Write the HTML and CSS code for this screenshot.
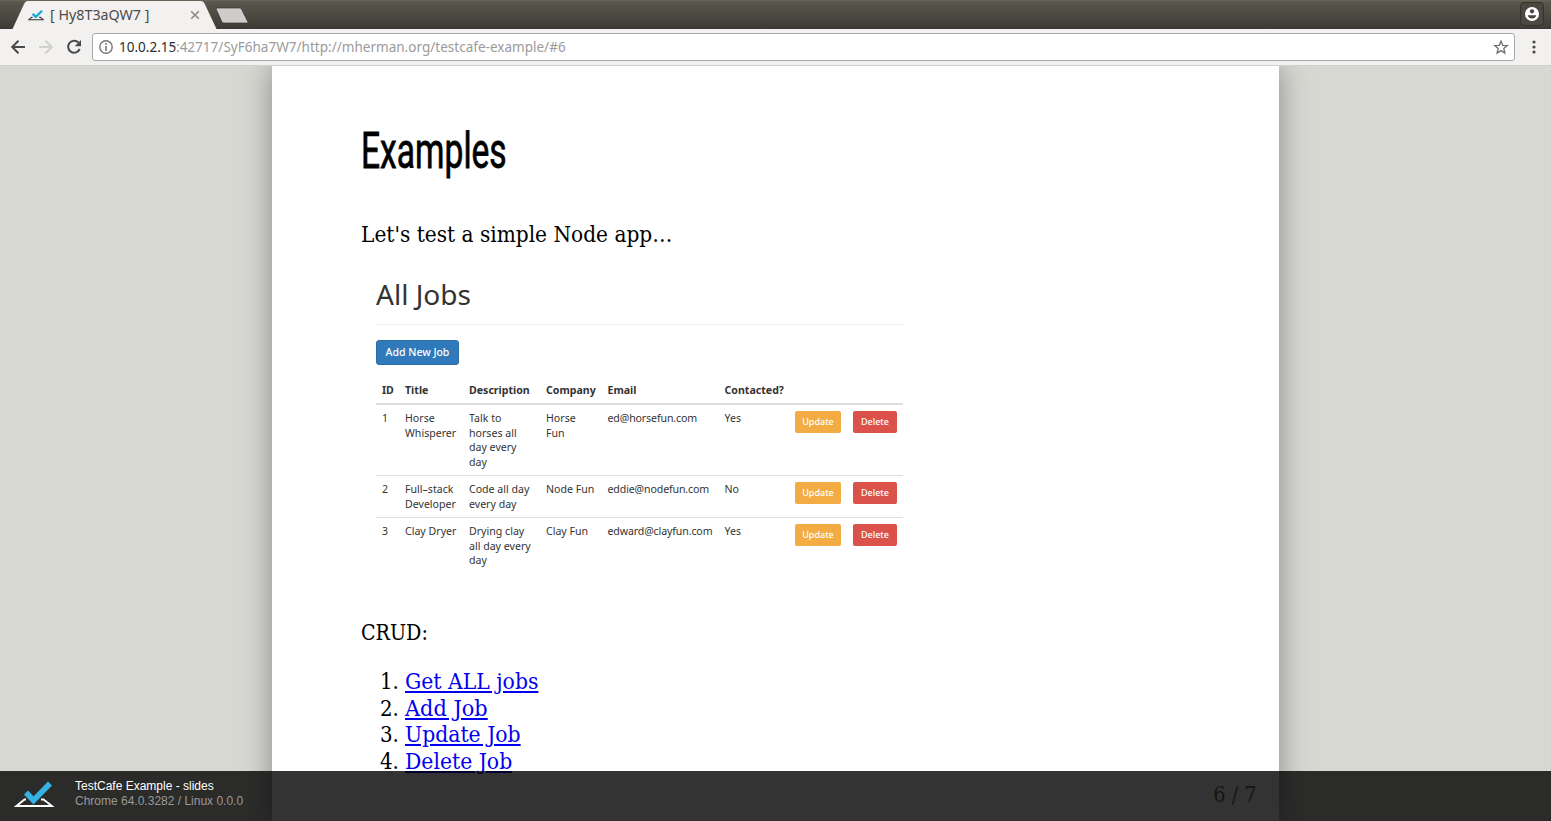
FILE: index.html
```html
<!DOCTYPE html>
<html lang="en">
<head>
<meta charset="utf-8">
<title>[ Hy8T3aQW7 ]</title>
<link rel="stylesheet" href="styles.css">
</head>
<body>
<div class="window">
  <header class="tabs">
    <svg class="tab-shapes" width="260" height="29" viewBox="0 0 260 29">
      <path d="M12.5 29 24.3 3.6Q25.3 1 27.5 1H201Q203.500 1 204.500 3.500L216.500 29Z" fill="#f2f1f0"/>
      <path d="M217.500 8h22q1.500 0 2 1.200l6.200 12.300q.5 1.500-.8 1.500h-23q-1.500 0-2-1.200l-5.600-12.300q-.5-1.500 1.200-1.500z" fill="#cfcccb" stroke="#36342f" stroke-width=".7"/>
    </svg>
    <div class="tab">
      <svg width="16" height="16" viewBox="0 0 41 28"><path d="M12 20H9L2 26H39L32 20H28" fill="none" stroke="#333" stroke-width="2.600"/><path d="M12 11l8 8L36 3" fill="none" stroke="#16a9df" stroke-width="6"/></svg>
      <span class="tab-title"><span class="fit t-title">[ Hy8T3aQW7 ]</span></span>
      <svg class="close" width="10" height="10" viewBox="0 0 10 10"><path d="M1.200 1.200l7.600 7.600M8.800 1.200 1.200 8.800" stroke="#8b8a88" stroke-width="1.600"/></svg>
    </div>
    <div class="user"><svg width="14" height="14" viewBox="0 0 14 14"><circle cx="7" cy="7" r="7" fill="#fff"/><circle cx="7" cy="4.300" r="2.100" fill="#46443d"/><path d="M2.800 8.300h8.400Q10.500 11.600 7 11.600T2.800 8.300z" fill="#46443d"/></svg></div>
  </header>
  <nav class="toolbar">
    <svg class="nav-icon" width="16" height="16" viewBox="0 0 16 16"><path d="M15 8H2.500M8.500 1.700 2.200 8l6.300 6.300" fill="none" stroke="#4a4a4a" stroke-width="2"/></svg>
    <svg class="nav-icon" width="16" height="16" viewBox="0 0 16 16"><path d="M1 8h12.500M7.500 1.700 13.800 8l-6.300 6.300" fill="none" stroke="#d0d0cf" stroke-width="2"/></svg>
    <svg class="nav-icon" width="16" height="16" viewBox="0 0 16 16"><path d="M12.600 3.700A6 6 0 1 0 13.700 10" fill="none" stroke="#4a4a4a" stroke-width="2"/><path d="M15 1v6.300H8.700z" fill="#4a4a4a"/></svg>
    <div class="address">
      <svg width="14" height="14" viewBox="0 0 14 14"><circle cx="7" cy="7" r="6.200" fill="none" stroke="#777" stroke-width="1.400"/><path d="M7 3v1.700M7 6v5" stroke="#777" stroke-width="1.600"/></svg>
      <span class="url"><span class="fit t-host">10.0.2.15</span><span class="fit t-url">:42717/SyF6ha7W7/http://mherman.org/testcafe-example/#6</span></span>
      <svg class="star" width="16" height="16" viewBox="0 0 16 16"><path d="M8 2l1.700 4.300 4.600.3-3.500 3 1.100 4.500L8 11.600l-3.900 2.500 1.100-4.500-3.500-3 4.600-.3z" fill="none" stroke="#6e6e6e" stroke-width="1.300"/></svg>
    </div>
    <svg class="menu" width="4" height="14" viewBox="0 0 4 14"><circle cx="2" cy="2" r="1.600" fill="#4a4a4a"/><circle cx="2" cy="7" r="1.600" fill="#4a4a4a"/><circle cx="2" cy="12" r="1.600" fill="#4a4a4a"/></svg>
  </nav>
  <main class="stage">
    <article class="slide">
      <h1><span class="fit t-h1">Examples</span></h1>
      <p class="intro"><span class="fit t-intro">Let's test a simple Node app…</span></p>
      <section class="jobs">
        <h2><span class="fit t-h2">All Jobs</span></h2>
        <div class="add">Add New Job</div>
        <table>
          <colgroup><col class="c1"><col class="c2"><col class="c3"><col class="c4"><col class="c5"><col class="c6"><col class="c7"><col class="c8"></colgroup>
          <thead><tr><th>ID</th><th>Title</th><th>Description</th><th>Company</th><th>Email</th><th>Contacted?</th><th></th><th></th></tr></thead>
          <tbody>
            <tr class="r1"><td>1</td><td>Horse<br>Whisperer</td><td>Talk to<br>horses all<br>day every<br>day</td><td>Horse<br>Fun</td><td class="mail">ed@horsefun.com</td><td>Yes</td><td><span class="btn update">Update</span></td><td><span class="btn delete">Delete</span></td></tr>
            <tr class="r2"><td>2</td><td>Full–stack<br>Developer</td><td>Code all day<br>every day</td><td>Node Fun</td><td class="mail">eddie@nodefun.com</td><td>No</td><td><span class="btn update">Update</span></td><td><span class="btn delete">Delete</span></td></tr>
            <tr class="r3"><td>3</td><td>Clay Dryer</td><td>Drying clay<br>all day every<br>day</td><td>Clay Fun</td><td class="mail">edward@clayfun.com</td><td>Yes</td><td><span class="btn update">Update</span></td><td><span class="btn delete">Delete</span></td></tr>
          </tbody>
        </table>
      </section>
      <p class="crud"><span class="fit t-crud">CRUD:</span></p>
      <ol>
        <li><span class="num">1.</span><a class="fit t-link">Get ALL jobs</a></li>
        <li><span class="num">2.</span><a class="fit t-link t-add">Add Job</a></li>
        <li><span class="num">3.</span><a class="fit t-link">Update Job</a></li>
        <li><span class="num">4.</span><a class="fit t-link">Delete Job</a></li>
      </ol>
      <div class="page-number">6 / 7</div>
    </article>
  </main>
  <footer class="status">
    <svg width="41" height="28" viewBox="0 0 41 28"><path d="M12 18.500H10.500L2.500 25H38L29.500 18.500H27" fill="none" stroke="#fff" stroke-width="1.800"/><path d="M12 11.500l7.500 8L36 2.500" fill="none" stroke="#34b2e4" stroke-width="5.600"/></svg>
    <div class="status-text"><div>TestCafe Example - slides</div><div class="agent">Chrome 64.0.3282 / Linux 0.0.0</div></div>
  </footer>
</div>
</body>
</html>
```
FILE: styles.css
```css
* { box-sizing: border-box; }
body { margin: 0; overflow: hidden; }
.window { position: relative; width: 1551px; height: 821px; display: flex; flex-direction: column; overflow: hidden; background: #d7d8d2; }
.fit { display: inline-block; transform-origin: 0 50%; white-space: nowrap; }

.tabs { position: relative; height: 29px; flex: none; display: flex; justify-content: space-between; background: linear-gradient(#6a675a 0, #59574d 2px, #3e3c36 28px, #33322d 29px); }
.tab-shapes { position: absolute; left: 0; top: 0; }
.tab { position: relative; display: flex; align-items: center; width: 200px; height: 29px; padding-left: 28px; }
.tab-title { flex: 1; margin-left: 6px; font: 14px/20px "Noto Sans", "Open Sans", sans-serif; color: #4b4b4b; white-space: nowrap; }
.t-title { transform: scaleX(1.02); }
.close { flex: none; }
.user { width: 24px; height: 24px; margin: 2px 7px 0 0; border: 1px solid #35332e; border-radius: 4px; display: flex; align-items: center; justify-content: center; background: #4a4841; }

.toolbar { height: 37px; flex: none; display: flex; align-items: center; padding-left: 10px; background: #f2f1f0; border-bottom: 1px solid #cfcfcd; }
.nav-icon { margin-right: 12px; flex: none; }
.address { display: flex; align-items: center; width: 1423px; height: 28px; margin-left: -2px; padding: 0 5px 0 6px; background: #fff; border: 1px solid #a9a9a9; border-radius: 3px; }
.url { flex: 1; margin-left: 6px; font: 14px/20px "Noto Sans", "Open Sans", sans-serif; color: #9b9b9b; white-space: nowrap; }
.t-host { width: 57px; transform: scaleX(.965); color: #2d2d2d; }
.t-url { transform: scaleX(.967); }
.menu { margin-left: 16.500px; }

.stage { flex: 1; min-height: 0; display: flex; padding-left: 272px; overflow: hidden; }
.slide { position: relative; flex: none; width: 1006.500px; height: 755px; padding: 0 89px; background: #fff; box-shadow: 0 0 28px #888; color: #000; font-family: "DejaVu Serif Condensed", "DejaVu Serif", serif; font-stretch: condensed; font-size: 22px; }
h1 { height: 100px; margin: 35px 0 0; font: 400 50px/100px Roboto, sans-serif; -webkit-text-stroke: .8px #000; }
.t-h1 { transform: scaleX(.672); }
p { margin: 0; line-height: 30px; }
.intro { margin-top: 19px; height: 30px; }
.t-intro { transform: scaleX(1.018); }
.jobs { width: 542px; height: 318px; margin-top: 15px; padding: 0 0 0 15px; color: #333; font: 10.600px/14.700px "Noto Sans", "Open Sans", sans-serif; }
h2 { width: 527px; height: 60px; margin: 0; padding-top: 9px; border-bottom: 1px solid #eee; font: 400 27.500px/42px "Noto Sans", sans-serif; }
.t-h2 { transform: scaleX(1.02); }
.add { width: 83px; height: 25px; margin-top: 14.500px; border: 1px solid #2c6da5; border-radius: 3px; background: #3079ba; color: #fff; text-align: center; font-size: 10.500px; line-height: 23px; font-weight: 500; }
table { width: 527px; margin-top: 13.500px; border-collapse: separate; border-spacing: 0; table-layout: fixed; }
.c1 { width: 23px; } .c2 { width: 64px; } .c3 { width: 77px; } .c4 { width: 61.500px; } .c5 { width: 117px; } .c6 { width: 70.500px; } .c7 { width: 58px; } .c8 { width: 56px; }
th { height: 27px; padding: 0 0 0 6px; text-align: left; vertical-align: middle; font-weight: 700; border-bottom: 2px solid #ddd; white-space: nowrap; }
td { padding: 6px 0 0 6px; vertical-align: top; white-space: nowrap; border-bottom: 1px solid #ddd; }
.mail { letter-spacing: -.12px; }
.r1 { height: 71px; } .r2 { height: 42px; } .r3 { height: 57px; }
.r3 td { border-bottom: 0; }
.btn { display: block; height: 22px; border-radius: 2px; color: #fff; text-align: center; font-size: 9px; line-height: 22px; font-weight: 500; }
.update { width: 46px; background: #f2ac43; }
.delete { width: 44px; background: #db524b; }
.crud { margin-top: 35px; height: 30px; }
.t-crud { transform: scaleX(.965); }
ol { list-style: none; margin: 21px 0 0; padding: 0; }
li { display: flex; height: 26.600px; line-height: 26.600px; }
.num { width: 44px; padding-left: 19px; }
a { color: #00e; text-decoration: underline; }
.t-link { transform: scaleX(1.03); }
.t-add { transform: scaleX(1.055); }
.page-number { position: absolute; right: 22px; top: 714px; line-height: 30px; opacity: .6; transform: scaleX(.97); transform-origin: 100% 50%; }

.status { position: absolute; left: 0; right: 0; bottom: 0; height: 50px; display: flex; padding: 8px 0 0 14px; background: rgba(0,0,0,.8); color: #fff; font: 12px/15px "Liberation Sans", sans-serif; }
.status-text { margin-left: 20px; }
.status svg { margin-top: 2px; }
.agent { color: #999; }
```
